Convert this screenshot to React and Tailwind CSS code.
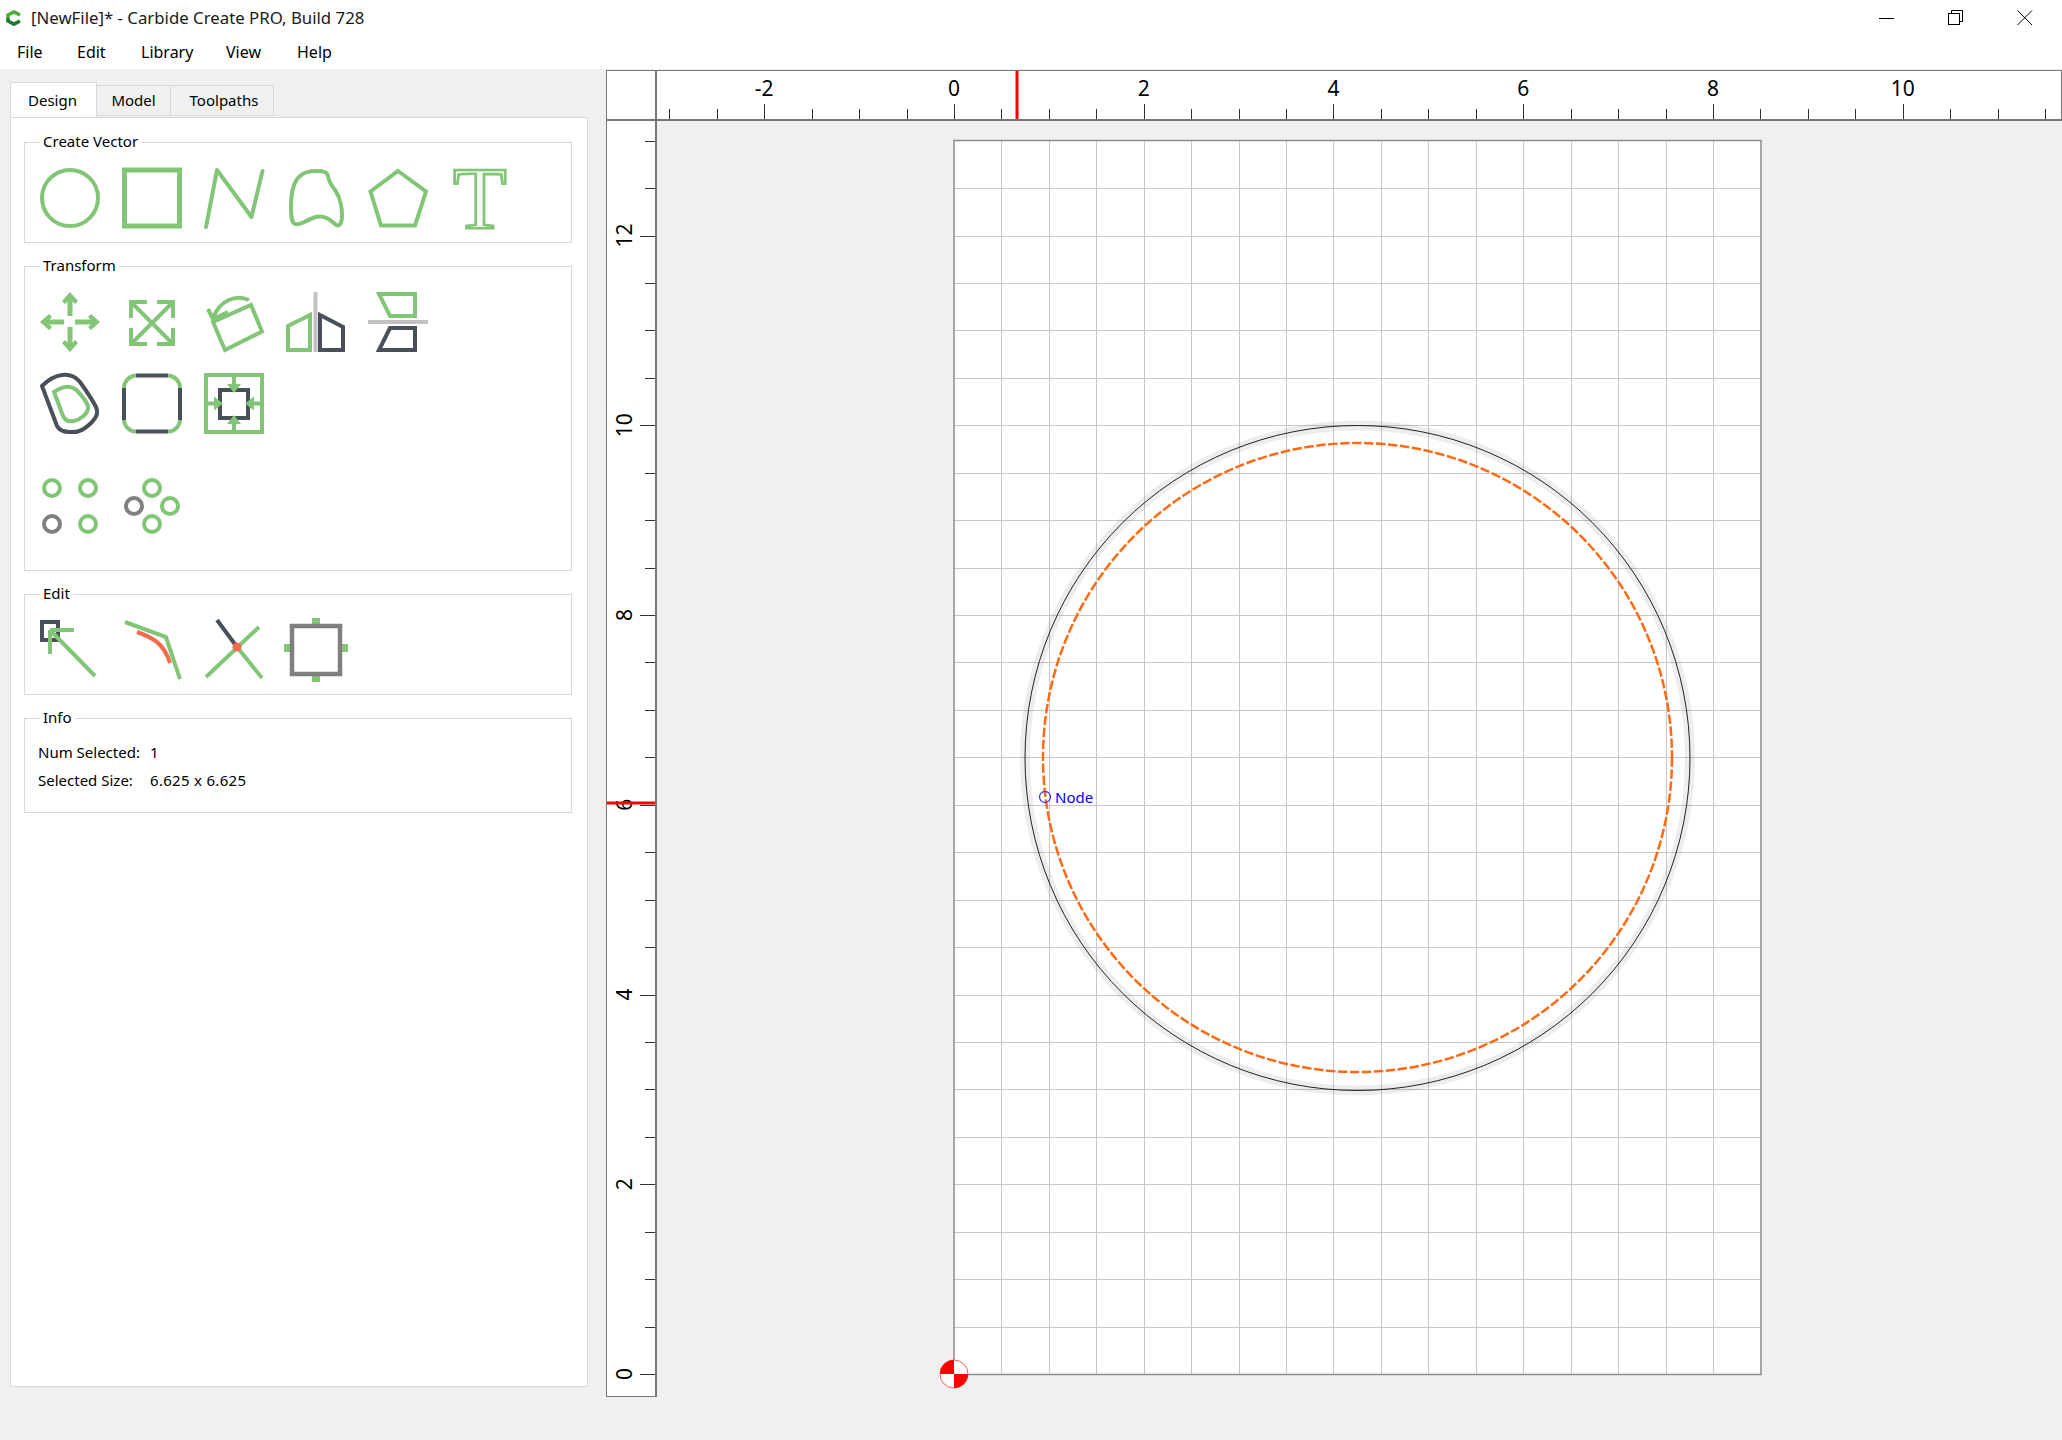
import React from "react";

const GREEN = "#82c577";
const DARK = "#495059";
const GRAY = "#808080";
const LIGHT = "#c2c2c2";
const RED = "#f26b4e";
const UNIT = 47.435;

function Icon({ children }) {
  return (
    <svg
      width="60"
      height="60"
      viewBox="0 0 60 60"
      fill="none"
      stroke={GREEN}
      strokeWidth="4"
      className="shrink-0 overflow-visible"
    >
      {children}
    </svg>
  );
}

function GroupBox({ title, className, children }) {
  return (
    <div className={"relative border border-[#d9d9d9] " + className}>
      <span className="absolute -top-[13px] left-[15px] bg-white px-[3px] text-[15px] leading-[22px] text-black">
        {title}
      </span>
      {children}
    </div>
  );
}

const createIcons = [
  <circle cx="30" cy="30" r="28" />,
  <rect x="2.5" y="2" width="55" height="56" strokeWidth="5" />,
  <path d="M2 59 L13 2 L47.5 49 L58.5 3" strokeLinecap="round" strokeLinejoin="round" />,
  <path d="M30 3 C38 3 41 4 42 8 C43 14 45 17 49 22 C54 29 56 40 56 47 C56 56 53 60 49 56 C43 51 38 47 30 49 C22 51 14 58 9 56 C5 54 5 47 5 38 C5 25 7 14 14 8 C18 4 23 3 30 3 Z" />,
  <path d="M30 3 L58 23.5 L47 57.5 L13 57.5 L2.5 23.5 Z" />,
  <text
    x="30"
    y="59.5"
    textAnchor="middle"
    fontSize="88"
    fill="#f6fbf5"
    strokeWidth="2.7"
    className="font-['Liberation_Serif',serif]"
  >
    T
  </text>,
];

const transformRow1 = [
  <g>
    <path d="M30 24 V6 M30 35 V54 M24 30 H6 M35 30 H54" strokeWidth="5" />
    <path d="M30 0 L38 9 L35 12 L30 7 L25 12 L22 9 Z M30 60 L22 51 L25 48 L30 53 L35 48 L38 51 Z M0 30 L9 22 L12 25 L7 30 L12 35 L9 38 Z M60 30 L51 38 L48 35 L53 30 L48 25 L51 22 Z" fill={GREEN} stroke="none" />
  </g>,
  <g>
    <path d="M25 10 H9 V26 M35 10 H51 V26 M25 52 H9 V36 M35 52 H51 V36" />
    <path d="M10 11 L50 51 M50 11 L10 51" />
  </g>,
  <g>
    <path d="M9 30 L47 13 L58 39.5 L21 58 Z" />
    <path d="M45 8 C32 2 16 8 9 26 M4 17 L9 27 L24 20" />
  </g>,
  <g>
    <path d="M29.5 0 V60" stroke={LIGHT} />
    <path d="M24 23 V58 H2 V34 Z" />
    <path d="M34 23 L57 35 V58 H34 Z" stroke={DARK} />
  </g>,
  <g>
    <path d="M0 30 H60" stroke={LIGHT} />
    <path d="M11 2 H47 V24 H22 Z" />
    <path d="M22 36 H47 V58 H11 Z" stroke={DARK} />
  </g>,
];

const transformRow2 = [
  <g>
    <path
      d="M2 13 C8 7 14 3 22 2 C30 1 35 3 40 9 C45 16 52 26 56 34 C59 40 56 45 52 49 C46 55 40 60 30 59 C24 59 19 57 17 53 Z"
      stroke={DARK}
    />
    <path d="M14 19 C20 15 25 13 30 14 C35 15 38 18 41 22 C45 27 49 32 48 36 C47 41 40 47 34 48 C29 49 25 47 23 43 Z" />
  </g>,
  <g>
    <path d="M14 2.5 H46 M14 58.5 H46 M2 15 V47 M58 15 V47" stroke={DARK} />
    <path d="M2 15 A12.5 12.5 0 0 1 14 2.5 M46 2.5 A12.5 12.5 0 0 1 58 15 M58 47 A12 12 0 0 1 46 58.5 M14 58.5 A12 12 0 0 1 2 47" />
  </g>,
  <g>
    <rect x="2" y="2" width="56" height="57" />
    <path d="M30 2 V12 M30 59 V49 M2 30.5 H12 M58 30.5 H48" />
    <rect x="16" y="17" width="28" height="28" stroke={DARK} />
    <path d="M30 20 L23 11 H37 Z M30 42 L37 51 H23 Z M19 30.5 L10 37.5 V23.5 Z M41 30.5 L50 23.5 V37.5 Z" fill={GREEN} stroke="none" />
  </g>,
];

const transformRow3 = [
  <g>
    <circle cx="12" cy="11" r="8" />
    <circle cx="48" cy="11" r="8" />
    <circle cx="12" cy="47" r="8" stroke={GRAY} />
    <circle cx="48" cy="47" r="8" />
  </g>,
  <g>
    <circle cx="30" cy="11" r="8" />
    <circle cx="12" cy="29" r="8" stroke={GRAY} />
    <circle cx="48" cy="29" r="8" />
    <circle cx="30" cy="47" r="8" />
  </g>,
];

const editIcons = [
  <g>
    <rect x="2" y="2" width="16" height="18" stroke={DARK} />
    <path d="M55 56 L10 10 M10 10 H34 M10 10 V34" />
  </g>,
  <g>
    <path d="M3 2 L44 17 L58 59" />
    <path d="M15 12 C32 18 42 24 48 43" stroke={RED} />
  </g>,
  <g>
    <path d="M13 0 L33 27" stroke={DARK} />
    <path d="M2 57 L55 7 M33 27 L58 58" />
    <circle cx="33" cy="27" r="4.5" fill={RED} stroke="none" />
  </g>,
  <g>
    <path d="M26 -2 H34 V4 H26 Z M26 56 H34 V62 H26 Z M-2 24 H4 V32 H-2 Z M56 24 H62 V32 H56 Z" fill={GREEN} stroke="none" />
    <rect x="6" y="6" width="48" height="48" stroke={GRAY} strokeWidth="4.5" />
  </g>,
];

function IconRow({ icons, className = "" }) {
  return (
    <div className={"flex gap-[22px] pl-[15px] " + className}>
      {icons.map((icon, i) => (
        <Icon key={i}>{icon}</Icon>
      ))}
    </div>
  );
}

function TopRuler() {
  const ticks = [];
  for (let k = -6; k <= 23; k++) ticks.push(k);
  return (
    <svg viewBox="657 71 1404 48" className="block h-[48px] w-[1404px]">
      {ticks.map((k) => {
        const x = Math.round(954 + k * UNIT) + 0.5;
        return <line key={k} x1={x} x2={x} y1={k % 4 === 0 ? 104 : 109} y2="119" stroke="#333" />;
      })}
      {[-2, 0, 2, 4, 6, 8, 10].map((n) => (
        <text
          key={n}
          x={954 + n * 2 * UNIT}
          y="95.5"
          textAnchor="middle"
          fontSize="21"
          fill="#000"
          className="font-['Noto_Sans',sans-serif]"
        >
          {n}
        </text>
      ))}
      <line x1="1017" x2="1017" y1="71" y2="119" stroke="#ff0000" strokeWidth="3" />
    </svg>
  );
}

function LeftRuler() {
  const ticks = [];
  for (let k = 0; k <= 26; k++) ticks.push(k);
  return (
    <svg viewBox="607 121 48 1275" className="block h-[1275px] w-[48px]">
      {ticks.map((k) => {
        const y = Math.round(1374 - k * UNIT) + 0.5;
        return <line key={k} x1={k % 4 === 0 ? 640 : 645} x2="655" y1={y} y2={y} stroke="#333" />;
      })}
      {[0, 2, 4, 6, 8, 10, 12].map((n) => {
        const y = 1374 - n * 2 * UNIT;
        return (
          <text
            key={n}
            x="632"
            y={y}
            textAnchor="middle"
            fontSize="21"
            fill="#000"
            transform={`rotate(-90 632 ${y})`}
            className="font-['Noto_Sans',sans-serif]"
          >
            {n}
          </text>
        );
      })}
      <line x1="607" x2="655" y1="803" y2="803" stroke="#ff0000" strokeWidth="3" />
    </svg>
  );
}

function Sheet() {
  const cols = [];
  for (let k = 1; k < 17; k++) cols.push(k);
  const rows = [];
  for (let k = 1; k < 26; k++) rows.push(k);
  return (
    <svg viewBox="657 121 1405 1319" className="block h-[1319px] w-[1405px]" fill="none">
      <rect x="954" y="140" width="807" height="1235" fill="#ffffff" />
      {cols.map((k) => {
        const x = Math.round(954 + k * UNIT) + 0.5;
        return <line key={k} x1={x} x2={x} y1="140" y2="1375" stroke="#c8c8c8" />;
      })}
      {rows.map((k) => {
        const y = Math.round(1374 - k * UNIT) + 0.5;
        return <line key={k} x1="954" x2="1761" y1={y} y2={y} stroke="#c8c8c8" />;
      })}
      <path d="M954 1375 V140.5 H1761 V1374.5 H954" stroke="#8c8c8c" strokeWidth="1.5" />
      <circle cx="1357.5" cy="758" r="332.5" stroke="#000000" strokeOpacity="0.07" strokeWidth="10" />
      <circle cx="1357.5" cy="758" r="332.5" stroke="#222222" strokeWidth="1" />
      <circle cx="1357.5" cy="757.5" r="314.5" stroke="#ff6a13" strokeWidth="2.5" strokeDasharray="9.5 2.5" />
      <circle cx="1045" cy="797" r="5.5" stroke="#3b3bff" strokeWidth="1.3" />
      <text x="1055" y="802.5" fontSize="15" fill="#0000ff" className="font-['Noto_Sans',sans-serif]">
        Node
      </text>
      <circle cx="954" cy="1374" r="14" fill="#ffffff" stroke="#ff5a5a" strokeWidth="1" />
      <path d="M954 1374 V1360 A14 14 0 0 0 940 1374 Z M954 1374 V1388 A14 14 0 0 0 968 1374 Z" fill="#ff0000" />
    </svg>
  );
}

export default function App() {
  return (
    <div className="h-[1440px] w-[2062px] overflow-hidden bg-[#f0f0f0] font-['Noto_Sans',sans-serif] text-black">
      <div className="bg-white">
        <div className="flex h-[35px] items-center">
          <svg width="16" height="16" viewBox="0 0 16 16" fill="none" strokeWidth="3.6" className="ml-[6px] mr-[9px]">
            <path d="M14 5 L8 1.8 L2 5 V8" stroke="#4caf3a" />
            <path d="M2 8 V11 L8 14.2 L14 11" stroke="#1f7a32" />
          </svg>
          <span className="text-[16.8px] text-[#1a1a1a]">[NewFile]* - Carbide Create PRO, Build 728</span>
          <div className="ml-auto flex items-center gap-[53px] pr-[29px]">
            <svg width="16" height="16" viewBox="0 0 16 16" fill="none" stroke="#000" strokeWidth="1">
              <path d="M0 8.5 H15" />
            </svg>
            <svg width="16" height="16" viewBox="0 0 16 16" fill="none" stroke="#000" strokeWidth="1">
              <rect x="0.5" y="3.5" width="11" height="11" />
              <path d="M3.5 3.5 V0.5 H14.5 V11.5 H11.5" />
            </svg>
            <svg width="16" height="16" viewBox="0 0 16 16" fill="none" stroke="#000" strokeWidth="1">
              <path d="M0.5 0.5 L15 15 M15 0.5 L0.5 15" />
            </svg>
          </div>
        </div>
        <div className="flex h-[34px] items-center pl-[17px] text-[16px]">
          <span className="w-[60px]">File</span>
          <span className="w-[64px]">Edit</span>
          <span className="w-[85px]">Library</span>
          <span className="w-[71px]">View</span>
          <span>Help</span>
        </div>
      </div>

      <div className="flex">
        <div className="w-[606px] shrink-0 pl-[10px] pt-[14px]">
          <div className="relative z-10 flex h-[34px] items-end text-[15px]">
            <div className="flex h-[35px] w-[87px] items-center justify-center border border-b-0 border-[#d9d9d9] bg-white pr-[2px]">
              Design
            </div>
            <div className="-ml-px mb-px flex h-[31px] w-[75px] items-center justify-center border border-[#d9d9d9] bg-[#f0f0f0]">
              Model
            </div>
            <div className="-ml-px mb-px flex h-[31px] w-[104px] items-center justify-center border border-[#d9d9d9] bg-[#f0f0f0] pl-[4px]">
              Toolpaths
            </div>
          </div>
          <div className="flex h-[1270px] w-[578px] flex-col gap-[23px] border border-[#d9d9d9] bg-white pb-0 pl-[13px] pr-[15px] pt-[24px]">
            <GroupBox title="Create Vector" className="h-[101px] shrink-0 pt-[25px]">
              <IconRow icons={createIcons} />
            </GroupBox>
            <GroupBox title="Transform" className="h-[305px] shrink-0 pt-[25px]">
              <IconRow icons={transformRow1} />
              <IconRow icons={transformRow2} className="mt-[21px]" />
              <IconRow icons={transformRow3} className="mt-[44px]" />
            </GroupBox>
            <GroupBox title="Edit" className="h-[101px] shrink-0 pt-[25px]">
              <IconRow icons={editIcons} />
            </GroupBox>
            <GroupBox title="Info" className="h-[95px] shrink-0 pt-[19px] text-[15px]">
              <div className="flex h-[28px] items-center pl-[13px]">
                <span className="w-[112px]">Num Selected:</span>
                <span>1</span>
              </div>
              <div className="flex h-[28px] items-center pl-[13px]">
                <span className="w-[112px]">Selected Size:</span>
                <span className="tracking-[0.3px]">6.625 x 6.625</span>
              </div>
            </GroupBox>
          </div>
        </div>

        <div className="mt-px flex-1">
          <div className="flex h-[51px] border-b-2 border-r border-t border-[#777777] bg-white">
            <div className="h-full w-[51px] shrink-0 border-l border-r-2 border-[#777777]" />
            <TopRuler />
          </div>
          <div className="flex">
            <div className="h-[1276px] w-[51px] shrink-0 border-b border-l border-r-2 border-[#777777] bg-white">
              <LeftRuler />
            </div>
            <Sheet />
          </div>
        </div>
      </div>
    </div>
  );
}
